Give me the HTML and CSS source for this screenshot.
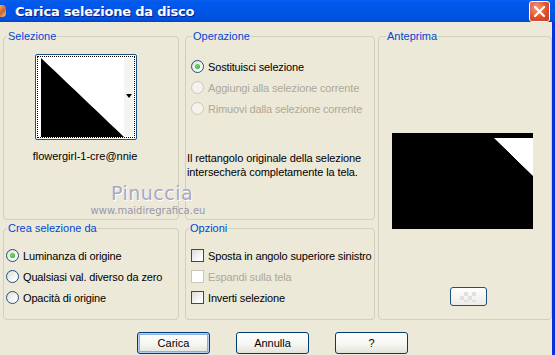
FILE: index.html
```html
<!DOCTYPE html>
<html>
<head>
<meta charset="utf-8">
<link rel="stylesheet" href="styles.css">
</head>
<body>
<div class="window">
  <div class="titlebar">
    <div class="app-icon"></div>
    <div class="title">Carica selezione da disco</div>
    <div class="close"><svg width="19" height="19" viewBox="0 0 19 19"><path d="M5 5 L14 14 M14 5 L5 14" stroke="#fff" stroke-width="2.2" stroke-linecap="round"/></svg></div>
  </div>
  <div class="client">
    <div class="groups">
      <fieldset class="grp sel">
        <legend>Selezione</legend>
        <div class="thumb">
          <div class="thumb-focus">
            <div class="thumb-img"></div>
            <div class="thumb-side"><span class="arrow"></span></div>
          </div>
        </div>
        <div class="thumb-name">flowergirl-1-cre@nnie</div>
      </fieldset>
      <fieldset class="grp op">
        <legend>Operazione</legend>
        <div class="opt"><span class="radio checked"></span>Sostituisci selezione</div>
        <div class="opt disabled"><span class="radio"></span>Aggiungi alla selezione corrente</div>
        <div class="opt disabled"><span class="radio"></span>Rimuovi dalla selezione corrente</div>
        <p class="note">Il rettangolo originale della selezione intersecherà completamente la tela.</p>
      </fieldset>
      <fieldset class="grp prev">
        <legend>Anteprima</legend>
        <div class="preview"><div class="corner"></div></div>
        <div class="zoom-btn"><span class="chk-pat"></span></div>
      </fieldset>
      <fieldset class="grp crea">
        <legend>Crea selezione da</legend>
        <div class="opt"><span class="radio checked"></span>Luminanza di origine</div>
        <div class="opt"><span class="radio"></span>Qualsiasi val. diverso da zero</div>
        <div class="opt"><span class="radio"></span>Opacità di origine</div>
      </fieldset>
      <fieldset class="grp opz">
        <legend>Opzioni</legend>
        <div class="opt"><span class="check"></span>Sposta in angolo superiore sinistro</div>
        <div class="opt disabled"><span class="check"></span>Espandi sulla tela</div>
        <div class="opt"><span class="check"></span>Inverti selezione</div>
      </fieldset>
    </div>
    <div class="buttons">
      <button class="btn default">Carica</button>
      <button class="btn">Annulla</button>
      <button class="btn">?</button>
    </div>
    <div class="watermark">
      <div class="wm1">Pinuccia</div>
      <div class="wm2">www.maidiregrafica.eu</div>
    </div>
  </div>
</div>
</body>
</html>
```
FILE: styles.css
```css
* { box-sizing: border-box; }
html, body { margin: 0; padding: 0; }
body {
  width: 555px;
  height: 355px;
  overflow: hidden;
  background: #ECE9D8;
  font-family: "Liberation Sans", Arial, sans-serif;
  font-size: 11px;
  color: #000;
}
.window {
  position: relative;
  width: 555px;
  height: 355px;
  border-right: 3px solid #0831D9;
}
.titlebar {
  height: 22px;
  display: flex;
  align-items: center;
  background: linear-gradient(#0A5FE8 0%, #0058EE 10%, #0055E5 50%, #0053E0 85%, #0046C8 100%);
  position: relative;
  margin-right: -3px;
}
.app-icon {
  width: 6px;
  height: 12px;
  background: linear-gradient(135deg, #E8B060 0%, #D06030 50%, #F0D090 100%);
  border-radius: 0 4px 4px 0;
}
.title {
  margin-left: 9px;
  color: #fff;
  font-weight: bold;
  font-size: 13px;
  font-family: "DejaVu Sans", "Liberation Sans", sans-serif;
  letter-spacing: -0.2px;
  text-shadow: 1px 1px 0 #0A1E8C;
}
.close {
  position: absolute;
  right: 5px;
  top: 1px;
  width: 21px;
  height: 21px;
  border: 1px solid #fff;
  border-radius: 3px;
  background: radial-gradient(circle at 35% 30%, #F29A7A 0%, #E0502E 55%, #C83A18 100%);
  display: flex;
  align-items: center;
  justify-content: center;
}
.client {
  position: relative;
  padding: 8px 0 0 3px;
}
.groups {
  display: grid;
  grid-template-columns: 176px 190px 171px;
  grid-template-rows: 190px 98px;
  column-gap: 6px;
  row-gap: 2px;
}
.grp {
  margin: 0;
  padding: 0;
  min-width: 0;
  border: 1px solid #D0D0BF;
  border-radius: 4px;
  position: relative;
}
.grp legend {
  color: #0046D5;
  padding: 0 1px;
  margin-left: 3px;
  line-height: 13px;
  font-size: 11px;
}
.op legend { margin-left: 6px; }
.prev { grid-column: 3; grid-row: 1 / span 2; margin-left: -3px; }
.prev legend { margin-left: 7px; }
.sel { display: flex; flex-direction: column; align-items: center; }
.thumb {
  margin-top: 11px;
  margin-right: 10px;
  width: 102px;
  height: 86px;
  border: 1px solid #1C5180;
  border-radius: 2px;
  background: #fff;
  padding: 1px;
}
.thumb-focus {
  width: 100%;
  height: 100%;
  border: 1px dotted #000;
  display: flex;
  padding: 1px 1px 1px 3px;
}
.thumb-img {
  width: 83px;
  height: 79px;
  background: linear-gradient(to top right, #000 49.6%, #fff 50.4%);
}
.thumb-side {
  flex: 1;
  background: #F4F4F0;
  position: relative;
}
.arrow {
  position: absolute;
  right: 1px;
  top: 36px;
  width: 0;
  height: 0;
  border-left: 3px solid transparent;
  border-right: 3px solid transparent;
  border-top: 4px solid #000;
}
.thumb-name {
  margin-top: 10px;
  margin-right: 12px;
}
.opt {
  display: flex;
  align-items: center;
  height: 13px;
  margin-bottom: 8px;
  white-space: nowrap;
  letter-spacing: -0.15px;
}
.opt.disabled { color: #ACA899; }
.op .opt:first-of-type { margin-top: 17px; }
.op .opt { margin-left: 5px; }
.crea .opt:first-of-type, .opz .opt:first-of-type { margin-top: 14px; }
.crea .opt { margin-left: 2px; }
.opz .opt { margin-left: 5px; }
.radio {
  width: 13px;
  height: 13px;
  border-radius: 50%;
  border: 1px solid #1C5180;
  background: linear-gradient(135deg, #DCDBD5 0%, #fff 80%);
  margin-right: 4px;
  position: relative;
  flex: none;
}
.disabled .radio { border-color: #CAC8BB; background: #F4F3EE; }
.radio.checked::after {
  content: "";
  position: absolute;
  left: 3px;
  top: 3px;
  width: 5px;
  height: 5px;
  border-radius: 50%;
  background: radial-gradient(circle at 40% 40%, #6EE36E, #21A121);
}
.check {
  width: 13px;
  height: 13px;
  border: 1px solid #1C5180;
  background: linear-gradient(135deg, #DCDBD5 0%, #fff 80%);
  margin-right: 4px;
  flex: none;
}
.disabled .check { border-color: #CAC8BB; background: #fff; }
.note {
  margin: 36px 0 0 1px;
  line-height: 14px;
  width: 185px;
  letter-spacing: -0.1px;
}
.prev { display: flex; flex-direction: column; align-items: center; }
.preview {
  margin-top: 90px;
  margin-right: 5px;
  width: 141px;
  height: 96px;
  background: #000;
  position: relative;
}
.corner {
  position: absolute;
  right: 0;
  top: 5px;
  width: 39px;
  height: 38px;
  background: linear-gradient(to top right, transparent 49.5%, #fff 50.5%);
}
.zoom-btn {
  margin-top: 58px;
  margin-left: 6px;
  width: 37px;
  height: 19px;
  border: 1px solid #1C5180;
  border-radius: 3px;
  background: linear-gradient(#fff, #ECEBE6);
  display: flex;
  align-items: center;
  justify-content: center;
}
.chk-pat {
  width: 16px;
  height: 10px;
  background:
    linear-gradient(45deg, #E0E0E0 25%, transparent 25%, transparent 75%, #E0E0E0 75%),
    linear-gradient(45deg, #E0E0E0 25%, transparent 25%, transparent 75%, #E0E0E0 75%);
  background-size: 8px 8px;
  background-position: 0 0, 4px 4px;
}
.buttons {
  display: flex;
  justify-content: flex-start;
  gap: 26px;
  padding-left: 134px;
  margin-top: 12px;
}
.btn {
  width: 73px;
  height: 22px;
  font-family: "Liberation Sans", Arial, sans-serif;
  font-size: 11px;
  color: #000;
  border: 1px solid #003C74;
  border-radius: 3px;
  background: linear-gradient(#FFFFFF 0%, #F4F4F0 60%, #E3E2DA 100%);
  padding: 0;
}
.btn.default {
  box-shadow: inset 0 0 0 1px #B8D0F8, inset 0 0 0 2px #89ADE4;
}
.watermark {
  position: absolute;
  left: 86px;
  top: 162px;
  width: 124px;
  text-align: center;
  line-height: 1;
}
.wm1 {
  font-family: "DejaVu Sans", sans-serif;
  font-size: 19px;
  letter-spacing: 0.5px;
  color: #A8A8C4;
  text-shadow: 1px 1px 0 #fff;
  padding-left: 8px;
}
.wm2 {
  font-family: "DejaVu Sans", sans-serif;
  font-size: 10px;
  margin-top: 3px;
  color: #9898A8;
}
```
